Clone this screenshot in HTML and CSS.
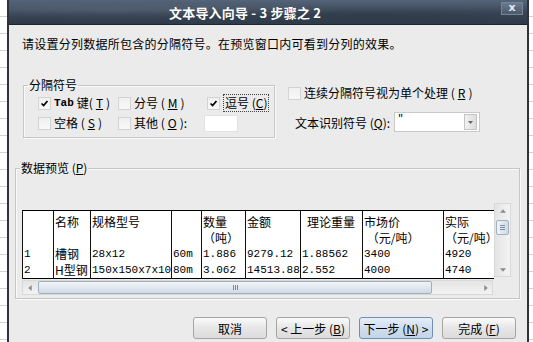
FILE: index.html
```html
<!DOCTYPE html>
<html lang="zh-CN">
<head>
  <meta charset="UTF-8">
  <title>文本导入向导</title>
  <link rel="stylesheet" href="styles.css">
</head>
<body>

  <div class="screen">
    <div class="sheet"></div>

    <!-- DIALOG -->
    <div class="dialog">
      <div class="titlebar">
        <span class="title">文本导入向导 - 3 步骤之 2</span>
        <span class="close">x</span>
      </div>

      <div class="content">
        <p class="intro">请设置分列数据所包含的分隔符号。在预览窗口内可看到分列的效果。</p>

        <div class="delims">
          <fieldset class="group sep-group">
            <legend>分隔符号</legend>
            <div class="opts">
              <label class="opt"><span class="cb"><svg viewBox="0 0 13 13"><path d="M3 6.5 L5.5 9 L10 3.5"/></svg></span><span class="latin">Tab</span> 键(<u>T</u>)</label>
              <label class="opt"><span class="cb"></span>分号 (<u>M</u>)</label>
              <label class="opt"><span class="cb"><svg viewBox="0 0 13 13"><path d="M3 6.5 L5.5 9 L10 3.5"/></svg></span><span class="focus">逗号 (<u>C</u>)</span></label>
              <label class="opt"><span class="cb"></span>空格 (<u>S</u>)</label>
              <label class="opt"><span class="cb"></span>其他 (<u>O</u>):<span class="other-input"></span></label>
            </div>
          </fieldset>

          <div class="side">
            <label class="opt"><span class="cb"></span>连续分隔符号视为单个处理 (<u>R</u>)</label>
            <div class="ident">
              <span>文本识别符号 (<u>Q</u>):</span>
              <div class="combo">
                <span class="combo-val">"</span>
                <span class="combo-btn"><svg viewBox="0 0 7 4"><polygon points="0,0 7,0 3.5,4"/></svg></span>
              </div>
            </div>
          </div>
        </div>

        <fieldset class="group preview">
          <legend>数据预览 (<u>P</u>)</legend>
          <div class="pv-body">
            <div class="pv-main">
              <div class="table-wrap">
                <table class="pv-table">
                  <colgroup>
                    <col style="width:31px"><col style="width:37px"><col style="width:81px">
                    <col style="width:30px"><col style="width:44px"><col style="width:55px">
                    <col style="width:62px"><col style="width:81px"><col style="width:51px">
                  </colgroup>
                  <tr class="head">
                    <td></td>
                    <td class="cn">名称</td>
                    <td class="cn">规格型号</td>
                    <td></td>
                    <td class="cn">数量<br>（吨）</td>
                    <td class="cn">金额</td>
                    <td class="cn indent">理论重量</td>
                    <td class="cn">市场价<br>&nbsp;（元/吨）</td>
                    <td class="cn">实际<br>（元/吨）</td>
                  </tr>
                  <tr>
                    <td>1</td>
                    <td class="cn">槽钢</td>
                    <td>28x12</td>
                    <td>60m</td>
                    <td>1.886</td>
                    <td>9279.12</td>
                    <td>1.88562</td>
                    <td>3400</td>
                    <td>4920</td>
                  </tr>
                  <tr>
                    <td>2</td>
                    <td class="cn">H型钢</td>
                    <td>150x150x7x10</td>
                    <td>80m</td>
                    <td>3.062</td>
                    <td>14513.88</td>
                    <td>2.552</td>
                    <td>4000</td>
                    <td>4740</td>
                  </tr>
                </table>
              </div>

              <div class="vscroll">
                <span class="sb-btn"><svg viewBox="0 0 7 4"><polygon points="0,4 7,4 3.5,0"/></svg></span>
                <span class="v-thumb"><i></i><i></i><i></i></span>
                <span class="sb-fill"></span>
                <span class="sb-btn"><svg viewBox="0 0 7 4"><polygon points="0,0 7,0 3.5,4"/></svg></span>
              </div>
            </div>

            <div class="hscroll">
              <span class="sb-btn"><svg viewBox="0 0 4 7"><polygon points="4,0 4,7 0,3.5"/></svg></span>
              <span class="h-thumb"><i></i><i></i><i></i></span>
              <span class="sb-fill"></span>
              <span class="sb-btn"><svg viewBox="0 0 4 7"><polygon points="0,0 0,7 4,3.5"/></svg></span>
            </div>
          </div>
        </fieldset>

        <div class="buttons">
          <button class="btn">取消</button>
          <button class="btn">&lt; 上一步 (<u>B</u>)</button>
          <button class="btn btn-default">下一步 (<u>N</u>) &gt;</button>
          <button class="btn">完成 (<u>F</u>)</button>
        </div>
      </div>
    </div>

    <div class="sheet sheet-right"></div>
  </div>

</body>
</html>
```

FILE: styles.css
```css
body {
  margin: 0;
  font-family: "Noto Sans CJK SC", "DejaVu Sans", sans-serif;
  font-size: 12px;
  color: #000;
}

.screen {
  display: flex;
  width: 533px;
  height: 342px;
  overflow: hidden;
}

/* --- spreadsheet behind the dialog --- */
.sheet {
  width: 7px;
  background: #fff repeating-linear-gradient(to bottom, transparent 0 16px, #d2d2d2 16px 17px);
}

.sheet-right {
  width: 4px;
}

/* --- DIALOG FRAME --- */
.dialog {
  flex: 1;
  display: flex;
  flex-direction: column;
  background: #ebebeb;
  border-left: 2px solid #2f343b;
  border-right: 2px solid #2f343b;
}

.titlebar {
  height: 25px;
  box-sizing: border-box;
  display: flex;
  align-items: center;
  padding-left: 160px;
  color: #fff;
  border-bottom: 1px solid #1f252c;
  background:
    radial-gradient(ellipse at 20% 40%, rgba(255,255,255,0.08), transparent 40%),
    radial-gradient(ellipse at 70% 60%, rgba(0,0,0,0.12), transparent 45%),
    linear-gradient(to bottom, #55647a, #3a4757 55%, #2e3a48);
}

.title {
  font-weight: bold;
  font-size: 13px;
  letter-spacing: 0.2px;
}

.close {
  margin-left: auto;
  margin-right: 4px;
  margin-top: -8px;
  width: 20px;
  height: 11px;
  line-height: 9px;
  text-align: center;
  font-family: "DejaVu Sans", sans-serif;
  font-size: 11px;
  font-weight: bold;
  color: #e6e9ee;
  border: 1px solid #76849a;
  background: linear-gradient(#6b7a8e, #4b596b);
}

/* --- PAGE CONTENT --- */
.content {
  padding-top: 11px;
}

.intro {
  margin: 0 0 0 13px;
  line-height: 16px;
  letter-spacing: 0.25px;
}

.delims {
  display: flex;
  margin-top: 25px;
}

.group {
  box-sizing: border-box;
  margin: 0;
  min-width: 0;
  border: 1px solid #c6c6c6;
  box-shadow: inset 1px 1px 0 #fafafa, 1px 1px 0 #fafafa;
}

.group legend {
  padding: 0 1px;
  line-height: 16px;
}

.sep-group {
  width: 252px;
  margin-left: 14px;
  padding: 0 0 4px 4px;
}

.opts {
  display: grid;
  grid-template-columns: 80px 89px auto;
  grid-auto-rows: 20px;
  padding-left: 10px;
}

.opt {
  display: flex;
  align-items: center;
  gap: 3px;
  white-space: nowrap;
  line-height: 16px;
}

.latin {
  font-family: "Liberation Mono", monospace;
  font-weight: bold;
  font-size: 11px;
}

.cb {
  width: 13px;
  height: 13px;
  box-sizing: border-box;
  border: 1px solid #d3d3d3;
  background: linear-gradient(#f0f0f0, #f8f8f8);
  flex-shrink: 0;
}

.cb svg {
  display: block;
  width: 11px;
  height: 11px;
}

.cb path {
  fill: none;
  stroke: #000;
  stroke-width: 2;
}

.focus {
  outline: 1px dotted #444;
  padding: 0 1px;
  margin-left: 1px;
}

.other-input {
  flex-shrink: 0;
  width: 34px;
  height: 17px;
  margin-left: 14px;
  background: #fff;
  border: 1px solid #e2e2e2;
  box-sizing: border-box;
}

.side {
  display: flex;
  flex-direction: column;
  margin-left: 13px;
  padding-top: 8px;
}

.ident {
  display: flex;
  align-items: center;
  margin-top: 11px;
  margin-left: 7px;
  height: 20px;
  white-space: nowrap;
}

.combo {
  display: flex;
  width: 86px;
  height: 20px;
  margin-left: 4px;
  box-sizing: border-box;
  background: #fff;
  border: 1px solid #c9c9c9;
  padding: 1px 2px 1px 3px;
}

.combo-val {
  flex: 1;
  line-height: 10px;
  font-size: 11px;
}

.combo-btn {
  width: 13px;
  display: flex;
  align-items: center;
  justify-content: center;
  box-sizing: border-box;
  border: 1px solid #c4c4c4;
  background: linear-gradient(to right, #f2f2f2, #dcdcdc);
}

.combo-btn svg {
  width: 5px;
  height: 3px;
  fill: #666;
}

/* --- PREVIEW --- */
.preview {
  width: 505px;
  margin: 22px 0 0 6px;
  padding: 0 0 3px 4px;
}

.pv-body {
  margin: 27px 0 0 2px;
}

.pv-main {
  display: flex;
  align-items: flex-end;
}

.table-wrap {
  width: 472px;
  overflow: hidden;
  background: #fff;
}

.pv-table {
  width: 472px;
  table-layout: fixed;
  border-collapse: collapse;
  border: 1px solid #000;
  font-family: "Liberation Mono", monospace;
  font-size: 11px;
}

.pv-table td {
  border-left: 1px solid #111;
  border-right: 1px solid #111;
  padding: 0 0 0 1px;
  line-height: 16px;
  vertical-align: top;
  white-space: nowrap;
  overflow: hidden;
}

.pv-table .head td {
  padding-top: 3px;
}

.pv-table .cn {
  font-family: "Noto Sans CJK SC", sans-serif;
  font-size: 12px;
}

.pv-table .indent {
  padding-left: 6px;
}

.vscroll {
  width: 17px;
  height: 74px;
  margin-bottom: 2px;
  box-sizing: border-box;
  display: flex;
  flex-direction: column;
  border: 1px solid #d8d8d8;
  background: linear-gradient(to right, #e4e4e4, #f3f3f3);
}

.hscroll {
  width: 471px;
  height: 15px;
  margin-top: 1px;
  box-sizing: border-box;
  display: flex;
  border: 1px solid #d8d8d8;
  background: linear-gradient(#e4e4e4, #f3f3f3);
}

.sb-btn {
  display: flex;
  align-items: center;
  justify-content: center;
  flex-shrink: 0;
  width: 13px;
  height: 13px;
}

.vscroll .sb-btn {
  width: auto;
}

.sb-btn svg {
  width: 6px;
  height: 4px;
  fill: #8a8a8a;
}

.hscroll .sb-btn svg {
  width: 4px;
  height: 6px;
}

.sb-fill {
  flex: 1;
}

.v-thumb,
.h-thumb {
  display: flex;
  align-items: center;
  justify-content: center;
  gap: 1px;
  box-sizing: border-box;
  border: 1px solid #a2afbf;
  border-radius: 2px;
}

.v-thumb {
  height: 15px;
  margin: 3px 1px 0;
  flex-direction: column;
  background: linear-gradient(to right, #f0f4f8, #cfdae6);
}

.v-thumb i {
  width: 5px;
  height: 1px;
  background: #7d8a99;
}

.h-thumb {
  width: 394px;
  margin: 0 0 0 2px;
  background: linear-gradient(#f0f4f8, #cfdae6);
}

.h-thumb i {
  width: 1px;
  height: 5px;
  background: #7d8a99;
}

/* --- BUTTONS --- */
.buttons {
  display: flex;
  justify-content: flex-end;
  gap: 9px;
  margin-top: 18px;
  padding-right: 11px;
}

.btn {
  width: 74px;
  height: 22px;
  padding: 0;
  font-family: inherit;
  font-size: 12px;
  color: #000;
  border: 1px solid #a5a5a5;
  border-radius: 3px;
  background: linear-gradient(#fbfbfb, #e6e6e6 50%, #dcdcdc);
}

.btn-default {
  border-color: #6f8fb3;
  background: linear-gradient(#e6eef8, #cfdeee 50%, #c3d5e9);
}
```
